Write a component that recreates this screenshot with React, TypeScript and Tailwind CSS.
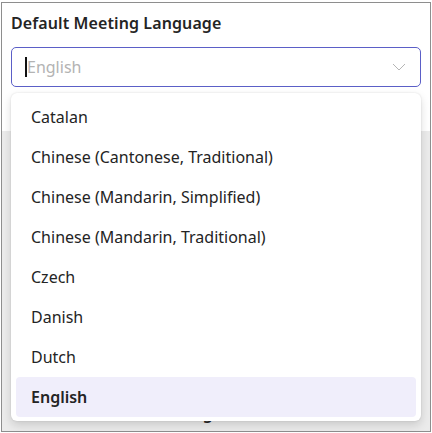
import React from 'react';

const languages = [
  'Catalan',
  'Chinese (Cantonese, Traditional)',
  'Chinese (Mandarin, Simplified)',
  'Chinese (Mandarin, Traditional)',
  'Czech',
  'Danish',
  'Dutch',
  'English',
];

const font = { fontFamily: '"Noto Sans", "Open Sans", sans-serif' };

export default function App() {
  const selected = 'English';

  return (
    <div className="w-[432px] h-[433px] bg-white pt-[2px] pl-[1px]" style={font}>
      <div className="relative w-[430px] h-[430px] border border-[#8e8e8e] bg-white flex flex-col">
        <div className="px-[9px] pt-[9px]">
          <h2 className="text-[16px] leading-[22px] font-semibold text-[#242424] tracking-[0.1px]">Default Meeting Language</h2>
          <div className="mt-[13px] h-[40px] flex items-center rounded-[5px] border border-[#5b5fc7] px-[13px]">
            <span className="w-[2px] h-[20px] bg-[#111]" />
            <span className="text-[16px] text-[#b3b3b3]">English</span>
            <svg className="ml-auto mr-[1px]" width="14" height="8" viewBox="0 0 14 8" fill="none">
              <path d="M1 1l6 6 6-6" stroke="#b5b5b5" strokeWidth="1" />
            </svg>
          </div>
        </div>

        {/* content sitting behind the open menu */}
        <div className="mt-[44px] flex-1 bg-[#ebebeb] flex flex-col justify-end items-start pl-[146px] pb-[8px]">
          <span className="text-[16px] font-semibold text-[#242424] leading-[20px]">Meeting</span>
        </div>

        <div className="absolute z-10 left-[9px] right-[9px] top-[90px] rounded-[6px] bg-white py-[4px] px-[5px] shadow-[0_4px_10px_rgba(0,0,0,0.14),0_0_2px_rgba(0,0,0,0.12)]">
          {languages.map((lang) => (
            <div
              key={lang}
              className={
                lang === selected
                  ? 'h-[40px] flex items-center px-[15px] rounded-[4px] bg-[#f0eefb] text-[16px] font-semibold text-[#242424]'
                  : 'h-[40px] flex items-center px-[15px] text-[16px] text-[#242424]'
              }
            >
              {lang}
            </div>
          ))}
        </div>
      </div>
    </div>
  );
}
